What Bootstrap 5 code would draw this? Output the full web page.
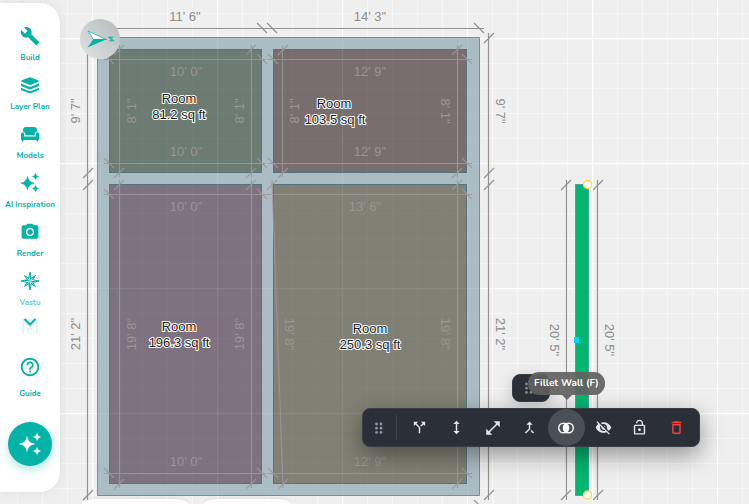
<!DOCTYPE html>
<html lang="en">
<head>
<meta charset="utf-8">
<meta name="viewport" content="width=device-width, initial-scale=1">
<title>Floor plan editor</title>
<link href="https://cdn.jsdelivr.net/npm/bootstrap@5.3.0/dist/css/bootstrap.min.css" rel="stylesheet">
<style>
  :root { --teal: #03b3a7; --ink: #2b3038; }
  body { font-family: Nunito, Lato, sans-serif; background: #efefef; }
  svg { display: block; }
  .plan text { font-family: "Liberation Sans", Arial, sans-serif; font-size: 13px; text-anchor: middle; }
  .outer-dims { stroke: #929292; stroke-width: 1.2; fill: none; }
  .outer-text { fill: #8c8c8c; }
  .inner-dims { stroke: #9b9898; stroke-opacity: .85; stroke-width: 1.2; fill: none; }
  .inner-text { fill: #989696; }
  .room-name { fill: #1c1c1c; stroke: #fff; stroke-width: 2px; paint-order: stroke; stroke-linejoin: round; }
  .side-panel { top: 3px; bottom: 12px; width: 60px; background: #fff; border-radius: 0 20px 20px 0; box-shadow: 0 0 12px rgba(0,0,0,.08); padding-top: 22px; }
  .side-scroll { height: 312px; overflow: hidden; }
  .side-link { height: 49px; color: var(--teal); font-size: 8px; line-height: 12px; font-weight: 700; white-space: nowrap; }
  .side-link svg { margin-bottom: 5px; }
  .faint { opacity: .65; }
  .fade-end { opacity: .15; }
  .more-btn { top: 308px; color: var(--teal); }
  .guide-link { height: 50px; margin-top: 19px; }
  .guide-link svg { margin-bottom: 10px; }
  .magic-btn { width: 44px; height: 44px; background: var(--teal); box-shadow: 0 4px 10px rgba(3,179,167,.3); margin-top: 16px; }
  .tool-shell { background: var(--ink); border: 1px solid #3a3f46; border-radius: 8px; }
  .edit-bar { left: 362px; top: 408px; width: 338px; height: 39px; padding: 0 4px; box-shadow: 0 8px 24px rgba(0,0,0,.4); color: #e6e6e6; }
  .grip { width: 24px; }
  .rule { width: 1px; height: 25px; background: #42474e; margin: 0 4px 0 5px; }
  .tool { height: 37px; color: inherit; flex: 1 1 0; min-width: 0; }
  .tool.current { background: #4b5056; color: #fff; }
  .mini-bar { left: 512px; top: 374px; width: 38px; height: 28px; box-shadow: 0 4px 16px rgba(0,0,0,.2); }
  .hint { left: 528px; top: 372px; width: 77px; text-align: center; height: 23px; border-radius: 11px; background: rgba(97,97,97,.92); color: #fff; font-size: 10px; line-height: 23px; font-weight: 700; white-space: nowrap; }
  .hint::after { content: ""; position: absolute; left: 50%; top: 100%; margin-left: -5px; border: 5px solid transparent; border-top-color: rgba(97,97,97,.92); border-bottom: 0; }
  .tabs-low { left: 82px; bottom: 0; height: 5px; gap: 16px; }
  .tab-low { background: #fff; border-radius: 14px 14px 0 0 / 5px 5px 0 0; width: 106px; box-shadow: 0 0 4px rgba(0,0,0,.1); }
  .tab-low + .tab-low { width: 87px; }
</style>
<script src="https://cdn.jsdelivr.net/npm/bootstrap@5.3.0/dist/js/bootstrap.bundle.min.js"></script>
</head>
<body class="position-relative vh-100 overflow-hidden">

<main class="position-absolute top-0 start-0 w-100 h-100">
<svg class="plan w-100 h-100" role="img" aria-label="Floor plan">
  <defs>
    <pattern id="fine" x="17" y="13" width="25" height="25" patternUnits="userSpaceOnUse"><path d="M.5 0V25M0 .5H25" stroke="#fff" stroke-opacity=".45"/></pattern>
    <pattern id="coarse" x="92" y="38" width="125" height="125" patternUnits="userSpaceOnUse"><path d="M.5 0V125M0 .5H125" stroke="#fff" stroke-width="1.4"/></pattern>
    <linearGradient id="disc" x1="0" x2="1" y1="1" y2="0"><stop stop-color="#e0e3e4"/><stop offset="1" stop-color="#b4babd"/></linearGradient>
    <path id="sl" d="M-5 5L5 -5"/><path id="bs" d="M-5 -5L5 5"/>
  </defs>
  <rect width="100%" height="100%" fill="#efefef"/>
  <rect width="100%" height="100%" fill="url(#fine)"/>
  <rect width="100%" height="100%" fill="url(#coarse)"/>

  <path d="M97.500 37.500H479.500V495.500H97.500Z" fill="#aabdc4" stroke="#6f909c"/>
  <g stroke="#56747e">
    <rect x="109.500" y="49.500" width="152" height="123" fill="#6c7b73"/>
    <rect x="273.500" y="49.500" width="193" height="123" fill="#796e6e"/>
    <rect x="109.500" y="184.500" width="152" height="299" fill="#7e7280"/>
    <rect x="273.500" y="184.500" width="193" height="299" fill="#818074"/>
  </g>
  <rect x="97" y="37" width="383" height="459" fill="url(#fine)" opacity=".05"/>
  <rect x="97" y="37" width="383" height="459" fill="url(#coarse)" opacity=".06"/>

  <g class="inner-dims">
    <path d="M104 59.500H266M104 163.500H266M119.500 45V177M251.500 45V177"/>
    <path d="M268 59.500H472M268 163.500H472M282.500 45V177M457.500 45V177"/>
    <path d="M104 194.500H266M104 473.500H266M119.500 180V488M251.500 180V488"/>
    <path d="M261 194.500H472M268 473.500H472M457.500 180V488M272 180L283 488"/>
    <use href="#bs" x="109" y="59"/><use href="#bs" x="262" y="59"/><use href="#bs" x="273" y="59"/><use href="#bs" x="467" y="59"/>
    <use href="#bs" x="109" y="163"/><use href="#bs" x="262" y="163"/><use href="#bs" x="273" y="163"/><use href="#bs" x="467" y="163"/>
    <use href="#bs" x="109" y="194"/><use href="#bs" x="262" y="194"/><use href="#bs" x="467" y="194"/>
    <use href="#bs" x="109" y="473"/><use href="#bs" x="262" y="473"/><use href="#bs" x="273" y="473"/><use href="#bs" x="467" y="473"/>
    <use href="#sl" x="119" y="50"/><use href="#sl" x="251" y="50"/><use href="#sl" x="283" y="50"/><use href="#sl" x="457" y="50"/>
    <use href="#sl" x="119" y="173"/><use href="#sl" x="251" y="173"/><use href="#sl" x="283" y="173"/><use href="#sl" x="457" y="173"/>
    <use href="#sl" x="119" y="185"/><use href="#sl" x="251" y="185"/><use href="#sl" x="272" y="185"/><use href="#sl" x="457" y="185"/>
    <use href="#sl" x="119" y="484"/><use href="#sl" x="251" y="484"/><use href="#sl" x="283" y="484"/><use href="#sl" x="457" y="484"/>
  </g>
  <g class="outer-dims">
    <path d="M93 28.500H484M87.500 45V500M488.500 33V500"/>
    <use href="#bs" x="262" y="28"/><use href="#bs" x="272" y="28"/><use href="#bs" x="479" y="28"/>
    <use href="#sl" x="88" y="173"/><use href="#sl" x="88" y="185"/><use href="#sl" x="88" y="495"/>
    <use href="#sl" x="489" y="38"/><use href="#sl" x="489" y="173"/><use href="#sl" x="489" y="185"/><use href="#sl" x="489" y="495"/>
    <path d="M474 500L484 510"/>
    <path d="M566.500 180V500M597.500 180V500"/>
    <use href="#sl" x="566" y="185"/><use href="#sl" x="598" y="185"/><use href="#sl" x="566" y="495"/><use href="#sl" x="598" y="495"/>
  </g>
  <rect x="575.500" y="184.500" width="13" height="311" fill="#00b671" stroke="#3b8f8c" stroke-opacity=".7"/>
  <rect x="574" y="337" width="5" height="6" fill="#00d5ff"/>
  <g fill="#fff" stroke="#ffd54a" stroke-width="1.300"><circle cx="587.500" cy="184.500" r="4"/><circle cx="587.500" cy="495" r="4"/></g>

  <g class="outer-text">
    <text x="185" y="21">11' 6"</text><text x="370" y="21">14' 3"</text>
    <text transform="translate(80 111) rotate(-90)">9' 7"</text><text transform="translate(80 334) rotate(-90)">21' 2"</text>
    <text transform="translate(496 111) rotate(90)">9' 7"</text><text transform="translate(496 334) rotate(90)">21' 2"</text>
    <text transform="translate(550 340) rotate(90)">20' 5"</text><text transform="translate(605 340) rotate(90)">20' 5"</text>
  </g>
  <g class="inner-text">
    <text x="186" y="76">10' 0"</text><text x="186" y="156">10' 0"</text><text x="370" y="76">12' 9"</text><text x="370" y="156">12' 9"</text>
    <text x="186" y="211">10' 0"</text><text x="365" y="211">13' 6"</text><text x="186" y="466">10' 0"</text><text x="370" y="466">12' 9"</text>
    <text transform="translate(136 111) rotate(-90)">8' 1"</text><text transform="translate(244 111) rotate(-90)">8' 1"</text>
    <text transform="translate(299 111) rotate(-90)">8' 1"</text><text transform="translate(441 111) rotate(90)">8' 1"</text>
    <text transform="translate(136 334) rotate(-90)">19' 8"</text><text transform="translate(244 334) rotate(-90)">19' 8"</text>
    <text transform="translate(285 334) rotate(90)">19' 8"</text><text transform="translate(441 334) rotate(90)">19' 8"</text>
  </g>
  <g class="room-name">
    <text x="179" y="103">Room</text><text x="179" y="119">81.2 sq ft</text>
    <text x="334" y="108">Room</text><text x="335" y="124">103.5 sq ft</text>
    <text x="179" y="331">Room</text><text x="179" y="347">196.3 sq ft</text>
    <text x="370" y="333">Room</text><text x="370" y="349">250.3 sq ft</text>
  </g>
  <circle cx="100" cy="39" r="20" fill="url(#disc)"/>
  <path d="M88 31L106.500 39.500H93.500Z" fill="#fff" stroke="#03b3a7" stroke-width=".8"/>
  <path d="M87.500 47.500L107 39H93.500Z" fill="#03b3a7"/>
  <path d="M109.500 37V41L113 37V41" fill="none" stroke="#03b3a7" stroke-width="1.200" transform="rotate(90 111.250 39)"/>
</svg>
</main>

<div class="tabs-low position-absolute d-flex"><div class="tab-low"></div><div class="tab-low"></div></div>

<nav class="side-panel position-absolute start-0 d-flex flex-column align-items-center" aria-label="Tools">
  <div class="side-scroll">
    <a href="#" class="side-link d-flex flex-column align-items-center text-decoration-none"><svg width="20" height="22" viewBox="0 0 24 24" fill="currentColor"><path d="M22.700 19l-9.100-9.100c.9-2.300.4-5-1.500-6.900-2-2-5-2.400-7.400-1.300L9 6 6 9 1.600 4.700C.4 7.100.9 10.100 2.900 12.100c1.900 1.900 4.600 2.400 6.900 1.500l9.100 9.100c.4.4 1 .4 1.400 0l2.300-2.300c.5-.4.5-1.100.1-1.400z"/></svg>Build</a>
    <a href="#" class="side-link d-flex flex-column align-items-center text-decoration-none"><svg width="22" height="22" viewBox="0 0 22 22" fill="currentColor"><path d="M10.200 3.400Q11 3 11.800 3.400L19.200 6.200Q20.600 7 19.200 7.800L12.500 10.600Q11 11.200 9.500 10.600L2.800 7.800Q1.400 7 2.800 6.200Z"/><path d="M2 9.500L9.300 12.500Q11 13.200 12.700 12.500L20 9.500V11.500Q20 12 19.300 12.300L12.500 15Q11 15.600 9.500 15L2.700 12.300Q2 12 2 11.500Z"/><path d="M2 13.800L9.300 16.800Q11 17.500 12.700 16.800L20 13.800V15.500Q20 16 19.300 16.300L12.500 19Q11 19.600 9.500 19L2.700 16.300Q2 16 2 15.500Z"/></svg>Layer Plan</a>
    <a href="#" class="side-link d-flex flex-column align-items-center text-decoration-none"><svg width="22" height="22" viewBox="0 0 22 22" fill="currentColor"><path d="M4 8.500V7q0-3 3-3h8q3 0 3 3v1.500q-2 .3-2.300 2.500v1.200H6.300V11Q6 8.800 4 8.500Z"/><path d="M2 11q0-1.700 1.500-1.700T5.200 11v2.400H16.800V11q0-1.700 1.600-1.700T20 11v6h-1v1.500h-1.500V17h-13v1.500H3V17H2Z"/></svg>Models</a>
    <a href="#" class="side-link d-flex flex-column align-items-center text-decoration-none"><svg width="22" height="22" viewBox="0 0 22 22" fill="currentColor"><path d="M8.500 4.500Q9.500 10 15 11.200 9.500 12.300 8.500 17.800 7.400 12.300 2 11.200 7.400 10 8.500 4.500ZM16.500 1.500Q17 4 19.500 4.500 17 5 16.500 7.500 16 5 13.500 4.500 16 4 16.500 1.500ZM16.500 13.500Q17 16 19.500 16.500 17 17 16.500 19.500 16 17 13.500 16.500 16 16 16.500 13.500Z" stroke="currentColor" stroke-width=".6"/></svg>AI Inspiration</a>
    <a href="#" class="side-link d-flex flex-column align-items-center text-decoration-none"><svg width="20" height="22" viewBox="0 0 24 24" fill="currentColor"><path fill-rule="evenodd" d="M9 2L7.200 4H4c-1.100 0-2 .9-2 2v12c0 1.100.9 2 2 2h16c1.100 0 2-.9 2-2V6c0-1.100-.9-2-2-2h-3.200L15 2H9zm3 15a5 5 0 1 1 0-10 5 5 0 0 1 0 10z"/><circle cx="12" cy="12" r="3.200"/></svg>Render</a>
    <a href="#" class="side-link d-flex flex-column align-items-center text-decoration-none"><svg width="22" height="22" viewBox="0 0 22 22"><path d="M11 2L12.300 8.300 16.500 5.500 13.700 9.700 20 11 13.700 12.300 16.500 16.500 12.300 13.700 11 20 9.700 13.700 5.500 16.500 8.300 12.300 2 11 8.300 9.700 5.500 5.500 9.700 8.300Z" fill="#fff" stroke="currentColor"/><path d="M11 2V11L12.300 8.300ZM20 11H11L13.700 12.300ZM11 20V11L9.700 13.700ZM2 11H11L8.300 9.700ZM16.500 5.500L11 11L13.700 9.700ZM16.500 16.500L11 11L12.300 13.700ZM5.500 16.500L11 11L8.300 12.300ZM5.500 5.500L11 11L9.700 8.300Z" fill="currentColor"/></svg><span class="faint">Vastu</span></a>
    <a href="#" class="fade-end side-link d-flex flex-column align-items-center text-decoration-none" aria-label="More"><svg width="20" height="22" viewBox="0 0 20 22" fill="none" stroke="currentColor" stroke-width="1.500"><path d="M3 15V1H17V15M6 4L10 8 14 4M8 14V10H12V12"/></svg></a>
  </div>
  <button type="button" class="more-btn position-absolute btn p-0 border-0" aria-label="Scroll down"><svg width="14" height="22" viewBox="0 0 14 22" fill="none" stroke="currentColor" stroke-width="2"><path d="M1.500 8L7 13.500 12.500 8"/></svg></button>
  <a href="#" class="side-link guide-link d-flex flex-column align-items-center text-decoration-none"><svg width="22" height="22" viewBox="0 0 24 24" fill="currentColor"><path d="M11 18h2v-2h-2v2zm1-16C6.480 2 2 6.480 2 12s4.480 10 10 10 10-4.480 10-10S17.520 2 12 2zm0 18c-4.410 0-8-3.590-8-8s3.590-8 8-8 8 3.590 8 8-3.590 8-8 8zm0-14c-2.210 0-4 1.790-4 4h2c0-1.100.9-2 2-2s2 .9 2 2c0 2-3 1.750-3 5h2c0-2.250 3-2.500 3-5 0-2.210-1.790-4-4-4z"/></svg>Guide</a>
  <button type="button" class="magic-btn btn rounded-circle p-0 border-0 d-flex align-items-center justify-content-center text-white" aria-label="AI assistant"><svg width="24" height="24" viewBox="0 0 24 24" fill="currentColor"><path d="M9 4.500Q10 11 16.500 12 10 13 9 19.500 8 13 1.500 12 8 11 9 4.500ZM19 1.500Q19.500 4.500 22.500 5 19.500 5.500 19 8.500 18.500 5.500 15.500 5 18.500 4.500 19 1.500ZM19 15.500Q19.500 18.500 22.500 19 19.500 19.500 19 22.500 18.500 19.500 15.500 19 18.500 18.500 19 15.500Z" stroke="currentColor" stroke-width=".5"/></svg></button>
</nav>

<div class="tool-shell mini-bar position-absolute d-flex align-items-center justify-content-center">
  <svg width="10" height="14" viewBox="0 0 10 14" fill="#85888c" class="me-1"><circle cx="2.500" cy="3" r="1.400"/><circle cx="7" cy="3" r="1.400"/><circle cx="2.500" cy="7.200" r="1.400"/><circle cx="7" cy="7.200" r="1.400"/><circle cx="2.500" cy="11.400" r="1.400"/><circle cx="7" cy="11.400" r="1.400"/></svg>
</div>

<div class="tool-shell edit-bar position-absolute d-flex align-items-center" role="toolbar" aria-label="Wall tools">
  <div class="grip d-flex justify-content-center"><svg width="10" height="14" viewBox="0 0 10 14" fill="#93969a"><circle cx="2.500" cy="3" r="1.400"/><circle cx="7" cy="3" r="1.400"/><circle cx="2.500" cy="7.200" r="1.400"/><circle cx="7" cy="7.200" r="1.400"/><circle cx="2.500" cy="11.400" r="1.400"/><circle cx="7" cy="11.400" r="1.400"/></svg></div>
  <div class="rule"></div>
  <button type="button" class="tool btn p-0 border-0 d-flex align-items-center justify-content-center" aria-label="Split wall"><svg width="17" height="17" viewBox="0 0 24 24" fill="currentColor"><path d="M14 4l2.290 2.290-2.880 2.880 1.420 1.420 2.880-2.880L20 10V4zm-4 0H4v6l2.290-2.290 4.710 4.700V20h2v-8.410l-5.290-5.300z"/></svg></button>
  <button type="button" class="tool btn p-0 border-0 d-flex align-items-center justify-content-center" aria-label="Height"><svg width="17" height="17" viewBox="0 0 24 24" fill="currentColor"><path d="M13 7h3.500L12 2.500 7.500 7H11v10H7.500L12 21.500l4.500-4.500H13z"/></svg></button>
  <button type="button" class="tool btn p-0 border-0 d-flex align-items-center justify-content-center" aria-label="Resize"><svg width="18" height="18" viewBox="0 0 24 24" fill="currentColor"><path d="M21 11V3h-8l3.290 3.290-10 10L3 13v8h8l-3.290-3.290 10-10z"/></svg></button>
  <button type="button" class="tool btn p-0 border-0 d-flex align-items-center justify-content-center" aria-label="Merge walls"><svg width="17" height="17" viewBox="0 0 24 24" fill="currentColor"><path d="M17 20.410L18.410 19 15 15.590 13.590 17 17 20.410zM7.500 8H11v5.590L5.590 19 7 20.410l6-6V8h3.500L12 3.500 7.500 8z"/></svg></button>
  <button type="button" class="tool current rounded-circle btn p-0 border-0 d-flex align-items-center justify-content-center" aria-label="Fillet wall"><svg width="18" height="14" viewBox="0 0 18 14"><path d="M9 2.200a5.200 5.200 0 0 1 0 9.600a5.200 5.200 0 0 1 0-9.600Z" fill="currentColor"/><g fill="none" stroke="currentColor" stroke-width="1.400"><circle cx="6.500" cy="7" r="4.800"/><circle cx="11.500" cy="7" r="4.800"/></g></svg></button>
  <button type="button" class="tool btn p-0 border-0 d-flex align-items-center justify-content-center" aria-label="Hide"><svg width="17" height="17" viewBox="0 0 24 24" fill="currentColor"><path d="M12 7c2.760 0 5 2.240 5 5 0 .65-.13 1.260-.36 1.830l2.920 2.920c1.510-1.260 2.700-2.890 3.430-4.750-1.730-4.390-6-7.500-11-7.500-1.400 0-2.740.25-3.980.7l2.160 2.160C10.740 7.130 11.350 7 12 7zM2 4.270l2.280 2.280.46.46C3.080 8.300 1.780 10.020 1 12c1.730 4.390 6 7.500 11 7.500 1.550 0 3.030-.3 4.380-.84l.42.42L19.730 22 21 20.730 3.270 3 2 4.270zM7.530 9.800l1.550 1.550c-.05.21-.08.43-.08.65 0 1.660 1.340 3 3 3 .22 0 .44-.03.65-.08l1.550 1.550c-.67.33-1.410.53-2.200.53-2.760 0-5-2.240-5-5 0-.79.2-1.530.53-2.200zm4.310-.78l3.150 3.150.02-.16c0-1.660-1.340-3-3-3l-.17.01z"/></svg></button>
  <button type="button" class="tool btn p-0 border-0 d-flex align-items-center justify-content-center" aria-label="Unlock"><svg width="17" height="17" viewBox="0 0 24 24" fill="currentColor"><path d="M12 17c1.100 0 2-.9 2-2s-.9-2-2-2-2 .9-2 2 .9 2 2 2zm6-9h-1V6c0-2.760-2.240-5-5-5S7 3.240 7 6h1.900c0-1.710 1.390-3.100 3.100-3.100s3.100 1.390 3.100 3.100v2H6c-1.100 0-2 .9-2 2v10c0 1.100.9 2 2 2h12c1.100 0 2-.9 2-2V10c0-1.100-.9-2-2-2zm0 12H6V10h12v10z"/></svg></button>
  <button type="button" class="tool btn p-0 border-0 d-flex align-items-center justify-content-center" aria-label="Delete"><svg width="17" height="17" viewBox="0 0 24 24" fill="#f8403c"><path d="M16 9v10H8V9h8m-1.500-6h-5l-1 1H5v2h14V4h-3.500l-1-1zM18 7H6v12c0 1.100.9 2 2 2h8c1.100 0 2-.9 2-2V7z"/></svg></button>
</div>
<div class="hint position-absolute" role="tooltip">Fillet Wall (F)</div>
</body>
</html>
